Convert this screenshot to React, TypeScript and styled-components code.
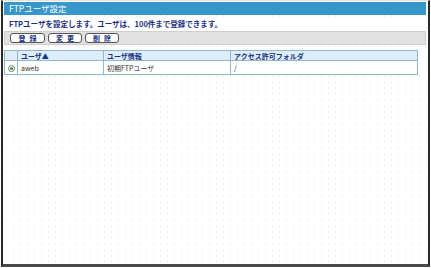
import React from "react";
import styled, { createGlobalStyle } from "styled-components";

const Global = createGlobalStyle`
  html, body { margin: 0; padding: 0; background: #ffffff; }
  body { font-family: "Noto Sans CJK JP", "Noto Sans", sans-serif; }
  * { box-sizing: border-box; }
`;

const Frame = styled.div`
  margin-left: 1px;
  width: 429px;
  height: 267px;
  border-left: 2px solid #2a2a2a;
  border-right: 2px solid #2a2a2a;
  border-bottom: 3px solid #4a4a4a;
  border-top: 1px solid #e4e4e4;
  padding: 1px 2px 0 1px;
  background-color: #fff;
  background-image: radial-gradient(circle, #efefef 0.7px, transparent 1px);
  background-size: 7px 6px;
  display: flex;
  flex-direction: column;
`;

const TitleBar = styled.div`
  height: 13px;
  background: #3797c9;
  color: #fff;
  font-size: 8.5px;
  line-height: 13px;
  padding-left: 5px;
`;

const Desc = styled.div`
  height: 13px;
  margin-top: 2px;
  background: #fff;
  color: #1b2f82;
  font-size: 7.5px;
  font-weight: bold;
  line-height: 13px;
  padding-left: 5px;
`;

const Toolbar = styled.div`
  margin-top: 1px;
  height: 14px;
  background: #e1e1e1;
  border: 1px solid #cfcfcf;
  display: flex;
  align-items: center;
  gap: 3px;
  padding-left: 5px;
`;

const Btn = styled.button<{ $w: number }>`
  width: ${(p) => p.$w}px;
  height: 10px;
  padding: 0;
  border: 1px solid #555;
  border-radius: 3px;
  background: #fff;
  color: #1b2f82;
  font-family: "Noto Sans CJK JP", sans-serif;
  font-size: 7px;
  font-weight: bold;
  line-height: 8px;
  letter-spacing: 4px;
  text-indent: 4px;
`;

const Table = styled.table`
  margin-top: 5px;
  width: 413px;
  border-collapse: collapse;
  background: #fff;
  table-layout: fixed;
`;

const Th = styled.th<{ $w: number }>`
  width: ${(p) => p.$w}px;
  height: 10px;
  padding: 0 0 0 3px;
  background: #ddeef9;
  border: 1px solid #8fb7cf;
  color: #1b2f82;
  font-size: 7px;
  font-weight: bold;
  text-align: left;
  line-height: 8px;
`;

const Td = styled.td`
  height: 14px;
  padding: 0 0 0 3px;
  border: 1px solid #8fb7cf;
  color: #333;
  font-size: 7px;
  line-height: 12px;
`;

const Radio = styled.span`
  display: inline-block;
  width: 7px;
  height: 7px;
  border: 1px solid #777;
  border-radius: 50%;
  position: relative;
  vertical-align: middle;
  &::after {
    content: "";
    position: absolute;
    left: 1px;
    top: 1px;
    width: 3px;
    height: 3px;
    border-radius: 50%;
    background: #2a9a3a;
  }
`;

export default function App() {
  return (
    <>
      <Global />
      <Frame>
        <TitleBar>FTPユーザ設定</TitleBar>
        <Desc>FTPユーザを設定します。ユーザは、100件まで登録できます。</Desc>
        <Toolbar>
          <Btn $w={35}>登録</Btn>
          <Btn $w={34}>変更</Btn>
          <Btn $w={34}>削除</Btn>
        </Toolbar>
        <Table>
          <thead>
            <tr>
              <Th $w={13} />
              <Th $w={86}>ユーザ▲</Th>
              <Th $w={127}>ユーザ情報</Th>
              <Th $w={187}>アクセス許可フォルダ</Th>
            </tr>
          </thead>
          <tbody>
            <tr>
              <Td><Radio /></Td>
              <Td>aweb</Td>
              <Td>初期FTPユーザ</Td>
              <Td>/</Td>
            </tr>
          </tbody>
        </Table>
      </Frame>
    </>
  );
}
